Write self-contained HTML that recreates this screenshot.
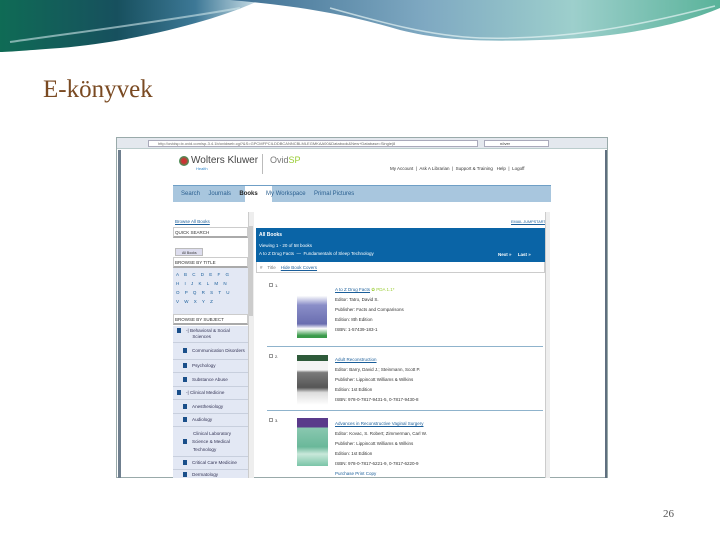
<!DOCTYPE html>
<html><head><meta charset="utf-8"><style>
*{margin:0;padding:0;box-sizing:border-box}
body{width:720px;height:540px;background:#fff;position:relative;overflow:hidden;font-family:"Liberation Sans",sans-serif}
.a{position:absolute}
.t{position:absolute;font-size:5px;color:#333;white-space:nowrap;line-height:6px}
.lk{color:#1a5e9a;text-decoration:underline}
.sb{position:absolute;left:173px;width:75px;background:#e3e8f4;border-bottom:1px solid #c8cfdd;font-size:4.6px;color:#335;line-height:6px;padding-left:4px}
.ic{display:inline-block;width:4px;height:5px;background:#1a4f8a;margin-right:5px;vertical-align:middle}
.sep{position:absolute;left:267px;width:276px;height:1px;background:#8fb3cc}
</style></head><body>
<svg class="a" style="left:0;top:0" width="720" height="55" viewBox="0 0 720 55">
<defs>
<linearGradient id="g1" gradientUnits="userSpaceOnUse" x1="0" y1="0" x2="260" y2="0"><stop offset="0" stop-color="#0f6b55"/><stop offset=".45" stop-color="#17505e"/><stop offset=".75" stop-color="#3d7896"/><stop offset="1" stop-color="#cfe2ea"/></linearGradient>
<linearGradient id="g2" gradientUnits="userSpaceOnUse" x1="230" y1="0" x2="720" y2="0"><stop offset="0" stop-color="#3e6f92"/><stop offset=".4" stop-color="#7fa9c2"/><stop offset=".7" stop-color="#9dcfcc"/><stop offset="1" stop-color="#5ab39a"/></linearGradient>
</defs>
<path d="M0 0H260C230 15 150 40 60 48C30 50 10 52 0 52Z" fill="url(#g1)"/>
<path d="M10 42C80 32 160 22 240 8" stroke="#cfe6ea" stroke-width="2" fill="none" opacity=".6"/>
<path d="M230 0H720V8C680 25 620 38 540 40C480 42 440 40 400 30C350 15 300 6 230 0Z" fill="url(#g2)"/>
<path d="M330 8C380 22 430 36 480 38C560 40 630 28 715 6" stroke="#e6f3f3" stroke-width="1.5" fill="none" opacity=".7"/>
</svg>
<div class="a" style="left:43px;top:76px;font-family:'Liberation Serif',serif;font-size:25px;color:#7a4a22">E-könyvek</div>
<div class="a" style="left:663px;top:508px;font-family:'Liberation Serif',serif;font-size:11px;color:#555">26</div>

<div class="a" style="left:116px;top:137px;width:492px;height:341px;background:#fff;border:1px solid #9aa"></div>
<div class="a" style="left:117px;top:138px;width:490px;height:11px;background:#e4e8ee;border-bottom:1px solid #bcc"></div>
<div class="a" style="left:148px;top:140px;width:330px;height:7px;background:#fff;border:1px solid #aab"></div>
<div class="t" style="left:158px;top:140.5px;font-size:4px;color:#666">http://ovidsp.tx.ovid.com/sp-3.4.1b/ovidweb.cgi?&amp;S=GPCMFPCILDDBCANNCBLMLEGMKAA00&amp;Databook&amp;New+Database=Single|8</div>
<div class="a" style="left:484px;top:140px;width:65px;height:7px;background:#fff;border:1px solid #aab"></div>
<div class="t" style="left:500px;top:140.5px;font-size:4px">növer</div>
<div class="a" style="left:118px;top:150px;width:3px;height:328px;background:#6f7f8f"></div>
<div class="a" style="left:605px;top:150px;width:2px;height:328px;background:#5f6f7f"></div>

<div class="a" style="left:179px;top:156px;width:10px;height:10px;border-radius:50%;background:radial-gradient(#c33 30%,#3a9a5a 70%)"></div>
<div class="t" style="left:191px;top:155px;font-size:10px;line-height:11px;color:#444">Wolters Kluwer</div>
<div class="t" style="left:196px;top:166px;font-size:4px;color:#38c">Health</div>
<div class="a" style="left:262px;top:154px;width:1px;height:20px;background:#bbb"></div>
<div class="t" style="left:270px;top:155px;font-size:9px;line-height:11px;color:#777">Ovid<span style="color:#9c3">SP</span></div>
<div class="t" style="left:390px;top:166px;font-size:4.5px">My Account &nbsp;| &nbsp;Ask A Librarian &nbsp;| &nbsp;Support &amp; Training &nbsp; Help &nbsp;| &nbsp;Logoff</div>

<div class="a" style="left:173px;top:185px;width:378px;height:17px;background:#a8c6de;border-top:1px solid #6f9fc6"></div>
<div class="a" style="left:245px;top:186px;width:27px;height:16px;background:#fff"></div>
<div class="t" style="left:181px;top:191px;font-size:6px;color:#2a5f8f">Search &nbsp;&nbsp;&nbsp; Journals &nbsp;&nbsp;&nbsp; <span style="color:#222;font-weight:bold">Books</span> &nbsp;&nbsp;&nbsp; My Workspace &nbsp;&nbsp;&nbsp; Primal Pictures</div>

<div class="t lk" style="left:175px;top:219px;font-size:4.5px">Browse All Books</div>
<div class="a" style="left:173px;top:227px;width:75px;height:11px;border:1px solid #ccc;border-bottom:2px solid #aaa"></div>
<div class="t" style="left:175px;top:230px;font-size:4.5px">QUICK SEARCH</div>
<div class="a" style="left:175px;top:248px;width:28px;height:8px;background:#dde;border:1px solid #bbb"></div>
<div class="t" style="left:182px;top:249.5px;font-size:3.5px">All Books</div>
<div class="a" style="left:173px;top:257px;width:75px;height:11px;border:1px solid #ccc;border-bottom:2px solid #aaa"></div>
<div class="t" style="left:175px;top:260px;font-size:4.5px">BROWSE BY TITLE</div>
<div class="a" style="left:173px;top:268px;width:75px;height:46px;background:#e3e8f4"></div>
<div class="t" style="left:176px;top:270px;font-size:4.5px;line-height:9px;color:#1a5e9a;word-spacing:4px;white-space:pre">A B C D E F G
H I J K L M N
O P Q R S T U
V W X Y Z</div>
<div class="a" style="left:173px;top:314px;width:75px;height:11px;border:1px solid #ccc;border-bottom:2px solid #aaa"></div>
<div class="t" style="left:175px;top:317px;font-size:4.5px">BROWSE BY SUBJECT</div>
<div class="sb" style="top:326px;height:17px;padding-top:2px"><span class="ic"></span>-| Behavioral &amp; Social<br>&nbsp;&nbsp;&nbsp;&nbsp;&nbsp;&nbsp;&nbsp;&nbsp;&nbsp;&nbsp;&nbsp;&nbsp;Sciences</div>
<div class="sb" style="top:343px;height:17px;padding:5px 0 0 10px"><span class="ic"></span>Communication Disorders</div>
<div class="sb" style="top:360px;height:13px;padding:3px 0 0 10px"><span class="ic"></span>Psychology</div>
<div class="sb" style="top:373px;height:14px;padding:4px 0 0 10px"><span class="ic"></span>Substance Abuse</div>
<div class="sb" style="top:387px;height:13px;padding-top:3px"><span class="ic"></span>-| Clinical Medicine</div>
<div class="sb" style="top:400px;height:14px;padding:4px 0 0 10px"><span class="ic"></span>Anesthesiology</div>
<div class="sb" style="top:414px;height:13px;padding:3px 0 0 10px"><span class="ic"></span>Audiology</div>
<div class="sb" style="top:427px;height:30px;padding:3px 0 0 10px;line-height:8px"><span style="margin-left:10px">Clinical Laboratory</span><br><span class="ic"></span>Science &amp; Medical<br><span style="margin-left:10px">Technology</span></div>
<div class="sb" style="top:457px;height:13px;padding:3px 0 0 10px"><span class="ic"></span>Critical Care Medicine</div>
<div class="sb" style="top:470px;height:8px;padding:2px 0 0 10px;border:0"><span class="ic"></span>Dermatology</div>
<div class="a" style="left:248px;top:212px;width:6px;height:266px;background:#eee;border-left:1px solid #ccc"></div>
<div class="a" style="left:249px;top:226px;width:4px;height:90px;background:#ccc"></div>

<div class="t lk" style="left:511px;top:219px;font-size:3.8px">EMAIL JUMPSTART</div>
<div class="a" style="left:256px;top:228px;width:289px;height:34px;background:#0a64a6"></div>
<div class="t" style="left:259px;top:232px;font-size:5px;color:#fff;font-weight:bold">All Books</div>
<div class="t" style="left:259px;top:243px;font-size:4.5px;color:#fff">Viewing 1 - 20 of 58 books</div>
<div class="t" style="left:259px;top:251px;font-size:4.5px;color:#fff">A to Z Drug Facts &nbsp;—&nbsp; Fundamentals of Sleep Technology</div>
<div class="t" style="left:498px;top:252px;font-size:4.5px;color:#fff;font-weight:bold">Next » &nbsp;&nbsp;&nbsp; Last »</div>
<div class="a" style="left:256px;top:262px;width:289px;height:11px;border:1px solid #ccc;border-top:0"></div>
<div class="t" style="left:260px;top:265px;font-size:4.5px;color:#777"># &nbsp;&nbsp; Title &nbsp;&nbsp; <span class="lk">Hide Book Covers</span></div>
<div class="a" style="left:545px;top:212px;width:5px;height:266px;background:#eee;border-left:1px solid #ccc"></div>

<div class="a" style="left:269px;top:283px;width:4px;height:4px;border:1px solid #999"></div>
<div class="t" style="left:275px;top:283px;font-size:4px">1.</div>
<div class="a" style="left:297px;top:291px;width:30px;height:47px;background:linear-gradient(#fff 10%,#8a8ec8 30%,#6a6eb0 70%,#fff 80%,#3a9a4a 95%)"></div>
<div class="t" style="left:335px;top:285px;font-size:4.5px;line-height:10px"><span class="lk">A to Z Drug Facts</span> <span style="color:#9c3">✿ PDA 1.1*</span><br>Editor: Tatro, David S.<br>Publisher: Facts and Comparisons<br>Edition: 8th Edition<br>ISBN: 1-57439-183-1</div>
<div class="sep" style="top:346px"></div>
<div class="a" style="left:269px;top:354px;width:4px;height:4px;border:1px solid #999"></div>
<div class="t" style="left:275px;top:354px;font-size:4px">2.</div>
<div class="a" style="left:297px;top:355px;width:31px;height:50px;background:linear-gradient(#2e5a3a 12%,#f4f4f4 12%,#f4f4f4 30%,#7a7a7a 35%,#555 65%,#ddd 75%,#fff)"></div>
<div class="t" style="left:335px;top:355px;font-size:4.5px;line-height:10px"><span class="lk">Adult Reconstruction</span><br>Editor: Barry, David J.; Steinmann, Scott P.<br>Publisher: Lippincott Williams &amp; Wilkins<br>Edition: 1st Edition<br>ISBN: 978-0-7817-9431-5, 0-7817-9430-8</div>
<div class="sep" style="top:410px"></div>
<div class="a" style="left:269px;top:418px;width:4px;height:4px;border:1px solid #999"></div>
<div class="t" style="left:275px;top:418px;font-size:4px">3.</div>
<div class="a" style="left:297px;top:418px;width:31px;height:48px;background:linear-gradient(#5a3a8a 20%,#8ac8b0 20%,#6ab89a 60%,#c9e8da 75%,#7ac4a8)"></div>
<div class="t" style="left:335px;top:419px;font-size:4.5px;line-height:10px"><span class="lk">Advances in Reconstructive Vaginal Surgery</span><br>Editor: Kovac, S. Robert; Zimmerman, Carl W.<br>Publisher: Lippincott Williams &amp; Wilkins<br>Edition: 1st Edition<br>ISBN: 978-0-7817-6221-9, 0-7817-6220-9<br><span class="lk" style="text-decoration:none">Purchase Print Copy</span></div>
</body></html>
